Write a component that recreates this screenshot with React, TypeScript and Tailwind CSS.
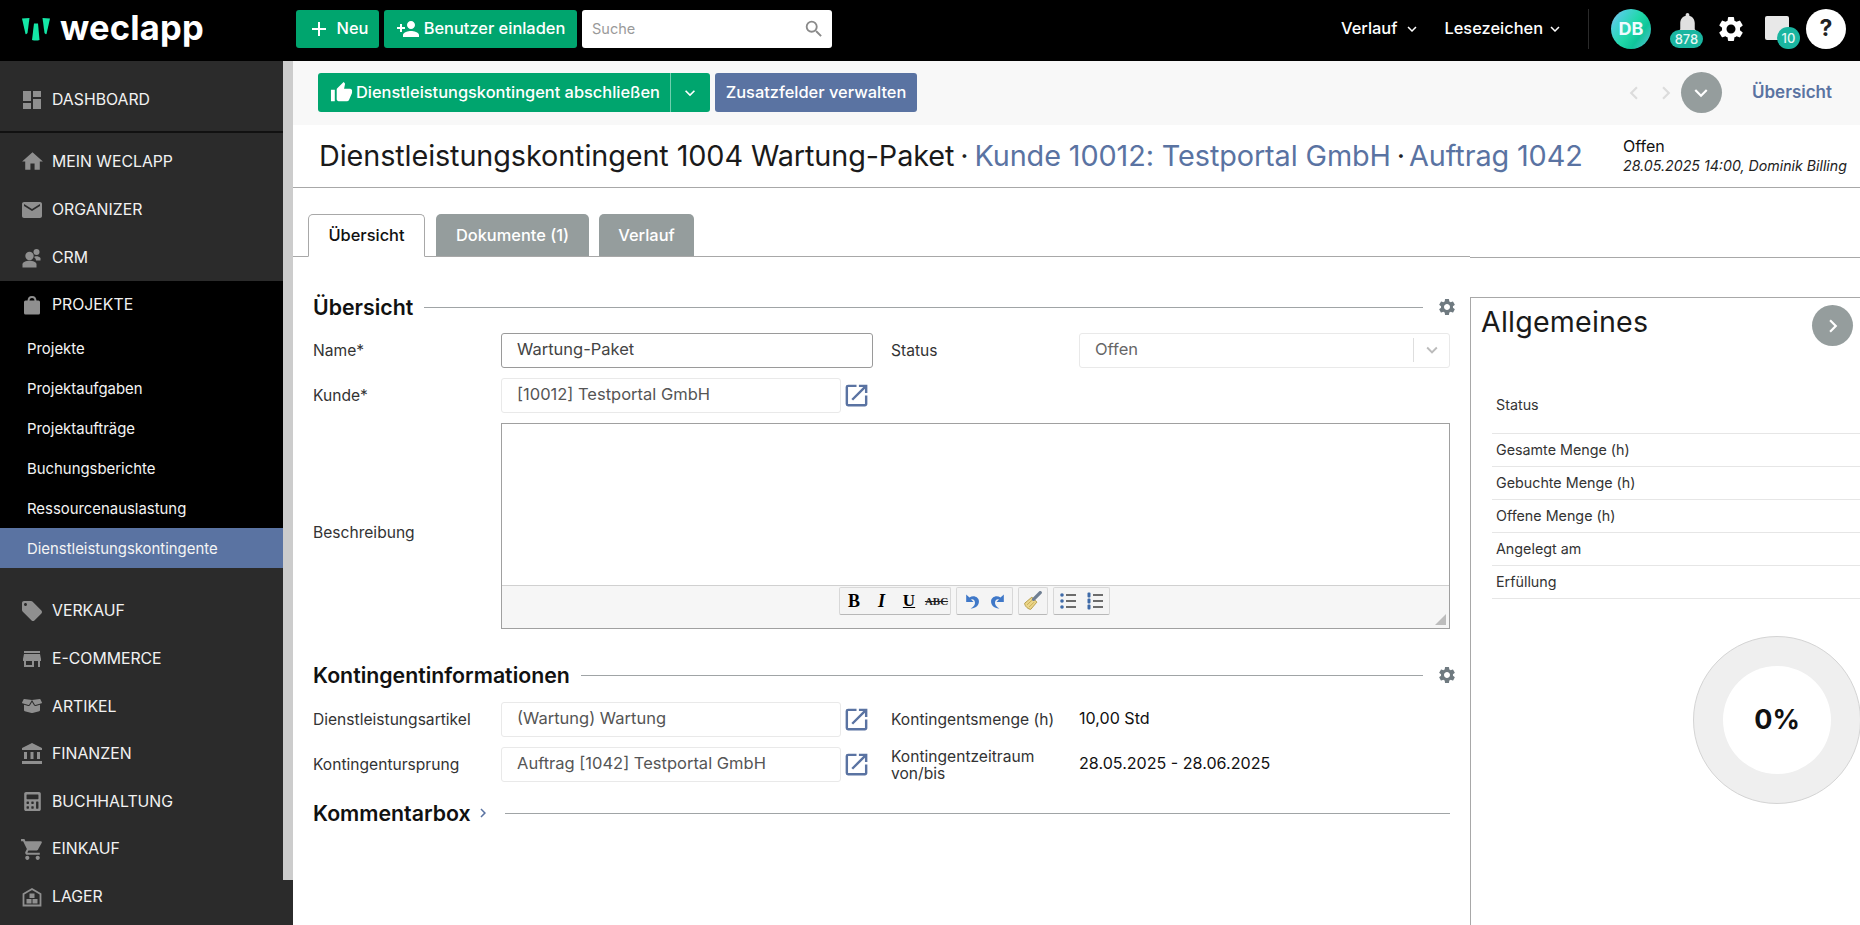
import React from "react";
import {
  MdDashboard, MdHome, MdEmail, MdLocalOffer, MdStore, MdAccountBalance, MdShoppingCart,
  MdThumbUp, MdPersonAdd, MdOpenInNew, MdNotifications, MdSettings, MdAdd, MdSearch,
  MdKeyboardArrowDown, MdKeyboardArrowRight, MdKeyboardArrowLeft,
} from "react-icons/md";
import { FaBoxOpen, FaCalculator } from "react-icons/fa";

const font = "font-['Inter','Liberation_Sans',sans-serif]";

function NavRow({ icon, label, h = "h-[48px]" }: { icon: React.ReactNode; label: string; h?: string }) {
  return (
    <div className={`${h} flex items-center pl-[23px] gap-[11px] pt-[1px] text-[15.8px] text-[#f2f2f2]`}>
      <span className="w-[18px] h-[18px] flex items-center justify-center text-[#8f8f8f] shrink-0 [&>svg]:shrink-0">{icon}</span>
      <span>{label}</span>
    </div>
  );
}

function Sub({ label, active }: { label: string; active?: boolean }) {
  return (
    <div className={`h-[40px] flex items-center pl-[27px] pt-[2px] text-[14.9px] text-[#f4f4f4] ${active ? "bg-[#5a73a2]" : ""}`}>{label}</div>
  );
}

function SectionHead({ title, gear = true }: { title: string; gear?: boolean }) {
  return (
    <div className="h-6 flex items-center">
      <span className="text-[21.3px] font-semibold text-[#111] leading-6 whitespace-nowrap">{title}</span>
      {!gear && <MdKeyboardArrowRight className="text-[#5a73a2] text-[18px] ml-[3px] shrink-0" />}
      <div className={`flex-1 h-px bg-[#a0a4a6] ${gear ? "ml-[11px]" : "ml-[13px]"}`} />
      {gear && <MdSettings className="text-[#6f7a80] text-[20px] ml-[14px] -mr-[7px] shrink-0" />}
    </div>
  );
}

function Label({ children }: { children: React.ReactNode }) {
  return <div className="w-[188px] shrink-0 text-[15.6px] text-[#333] whitespace-nowrap">{children}</div>;
}

function LinkField({ value }: { value: string }) {
  return (
    <div className="flex items-center w-[371px] shrink-0">
      <div className="w-[340px] h-[35px] pb-[2px] rounded-[3px] border border-[#e9e9e9] bg-white px-[15px] flex items-center text-[16.5px] text-[#555] whitespace-nowrap">{value}</div>
      <MdOpenInNew className="text-[#5a73a2] text-[29px] ml-[1px] shrink-0" />
    </div>
  );
}

function ToolBtn({ children }: { children: React.ReactNode }) {
  return <div className="w-[27.5px] h-[26px] flex items-center justify-center">{children}</div>;
}

function ToolGroup({ children }: { children: React.ReactNode }) {
  return <div className="flex bg-[#f4f4f4] border border-[#d8d8d8] border-b-[#b8b8b8] rounded-[2px]">{children}</div>;
}

function InfoRow({ label }: { label: string }) {
  return <div className="h-[33px] flex items-center pl-1 border-b border-[#e6e6e6] text-[14.3px] text-[#333]">{label}</div>;
}

const ArrowBack = ({ flip }: { flip?: boolean }) => (
  <svg width="17" height="17" viewBox="0 0 16 16" className={flip ? "-scale-x-100" : ""}>
    <path d="M3 1.5 L3 8.5 L10 8.5 L7.6 6 C9.6 5.2 11.8 7 11.2 10 C10.8 12 9 13.6 7 14.4 C11 15 15 12 15 8 C15 4 10 1.6 6.1 4.3 Z" fill="#3f78c8" />
  </svg>
);

const Brush = () => (
  <svg width="20" height="20" viewBox="0 0 18 18">
    <path d="M1.5 11 L8 5.5 L12.5 10 L7 16.5 C5 16.5 1.5 14 1.5 11 Z" fill="#ecd68a" stroke="#b0963e" strokeWidth="0.8" />
    <path d="M3.5 12.5 L8.5 8 M5.5 14.5 L10 10" stroke="#c4a94e" strokeWidth="0.8" />
    <path d="M9.5 7.5 L15.5 1.5" stroke="#6f7f92" strokeWidth="3" strokeLinecap="round" />
  </svg>
);

const Bullets = () => (
  <svg width="18" height="18" viewBox="0 0 18 18">
    {[3, 9, 15].map((y) => (
      <g key={y}>
        <circle cx="3" cy={y} r="1.8" fill="#3e6aa8" />
        <rect x="7" y={y - 0.7} width="10" height="1.4" fill="#333" />
      </g>
    ))}
  </svg>
);

const Numbers = () => (
  <svg width="18" height="18" viewBox="0 0 18 18">
    {[3, 9, 15].map((y) => (
      <g key={y}>
        <rect x="1.5" y={y - 2.5} width="3" height="5" rx="1" fill="#3e6aa8" />
        <rect x="7" y={y - 0.7} width="10" height="1.4" fill="#333" />
      </g>
    ))}
  </svg>
);

const Crm = () => (
  <svg width="20" height="20" viewBox="0 0 20 20" fill="currentColor">
    <circle cx="14.5" cy="4" r="3" />
    <path d="M12 9 C13 8 17 8 18.5 10 L18.5 12.5 L14 12.5 C14 11 13 10 12 9 Z" />
    <circle cx="7.5" cy="8" r="4.2" />
    <path d="M0.5 19.5 L0.5 16.5 C0.5 14 4 12.8 7.5 12.8 C11 12.8 14.5 14 14.5 16.5 L14.5 19.5 Z" />
  </svg>
);

const Bag = () => (
  <svg width="18" height="20" viewBox="0 0 18 20" fill="currentColor">
    <path d="M5.5 6 C5.5 0.5 12.5 0.5 12.5 6" fill="none" stroke="currentColor" strokeWidth="2" />
    <rect x="1" y="5.5" width="16" height="14" rx="1.5" />
  </svg>
);

const Lager = () => (
  <svg width="20" height="20" viewBox="0 0 20 20" fill="none" stroke="currentColor" strokeWidth="1.8">
    <path d="M1.5 18.5 L1.5 7 L10 2 L18.5 7 L18.5 18.5 Z" />
    <rect x="7.5" y="6.5" width="5" height="4.5" fill="currentColor" stroke="none" />
    <rect x="4.5" y="12" width="5" height="4.5" fill="currentColor" stroke="none" />
    <rect x="10.5" y="12" width="5" height="4.5" fill="currentColor" stroke="none" />
  </svg>
);

export default function App() {
  return (
    <div className={`${font} w-[1860px] h-[925px] overflow-hidden flex flex-col bg-white`}>
      {/* Top bar */}
      <header className="h-[61px] bg-black flex items-center pb-[4px] shrink-0 text-white">
        <div className="w-[296px] shrink-0 flex items-center pl-[22px] gap-[10px]">
          <svg width="28" height="24" viewBox="0 0 28 24" className="mt-[3px]">
            <path d="M0 0.5 L7.5 0 L5.5 15 Q4.6 16.5 3.5 16 Z" fill="#14e6a6" />
            <path d="M12 5.5 L16 5.5 L17.5 22 Q14 23 10 22 Z" fill="#14e6a6" />
            <path d="M20.5 0 L28 0.5 L24.5 16 Q23.4 16.5 22.5 15 Z" fill="#14e6a6" />
          </svg>
          <span className="text-[34.5px] font-bold tracking-[0.2px] leading-none">weclapp</span>
        </div>
        <div className="flex items-center gap-[5px]">
          <div className="w-[83px] h-[38px] rounded-[3px] bg-[#00a56e] flex items-center justify-center gap-[6px] text-[16.4px] font-medium">
            <MdAdd className="text-[24px]" /> Neu
          </div>
          <div className="w-[193px] h-[38px] rounded-[3px] bg-[#00a56e] flex items-center justify-center gap-[4px] text-[16.4px] font-medium whitespace-nowrap">
            <MdPersonAdd className="text-[24px]" /> Benutzer einladen
          </div>
          <div className="w-[250px] h-[38px] rounded-[3px] bg-white flex items-center justify-between pl-[10px] pr-[7px] text-[14.5px] text-[#9a9a9a]">
            Suche <MdSearch className="text-[22px] text-[#8a8a8a]" />
          </div>
        </div>
        <div className="flex-1" />
        <div className="flex items-center text-[16.4px] font-medium">
          <span>Verlauf</span>
          <MdKeyboardArrowDown className="text-[18px] ml-[6px] mr-[23px]" />
          <span>Lesezeichen</span>
          <MdKeyboardArrowDown className="text-[18px] ml-[3px]" />
          <div className="w-px h-[40px] bg-[#2a2a2a] ml-[24px] mr-[22px]" />
          <div className="w-[40px] h-[40px] rounded-full bg-[linear-gradient(125deg,#9fb4f0_0%,#48d0d8_22%,#20d8a8_50%,#0fc59a_70%,#5fc0d8_100%)] flex items-center justify-center text-[18px] font-bold text-[#f0fbff]">DB</div>
          <div className="relative w-[30px] h-[40px] ml-[21px]">
            <MdNotifications className="absolute left-[1px] top-[1px] text-[29px] text-[#e0e0e0]" />
            <span className="absolute left-[-2px] bottom-[1px] w-[33px] h-[18px] rounded-full bg-[#1ab5a0] text-[13px] text-center leading-[18px] text-[#e6f7f3]">878</span>
          </div>
          <MdSettings className="text-[30px] ml-[14px]" />
          <div className="relative w-[30px] h-[40px] ml-[20px]">
            <div className="absolute left-[-1px] top-[7px] w-[24px] h-[24px] rounded-[2px] bg-[#e8e8e8]" />
            <span className="absolute right-[-4px] bottom-0 w-[23px] h-[22px] rounded-full bg-[#1ab5a0] text-[13px] text-center leading-[22px] text-[#e6f7f3]">10</span>
          </div>
          <div className="w-[40px] h-[40px] rounded-full bg-white text-[#222] ml-[10px] mr-[14px] flex items-center justify-center text-[23px] font-bold">?</div>
        </div>
      </header>

      <div className="flex flex-1 min-h-0">
        {/* Sidebar */}
        <aside className="w-[293px] shrink-0 bg-[#2b2b2b] flex">
          <nav className="w-[283px] shrink-0">
            <div className="h-[72px] border-b-2 border-[#111] flex items-center pt-[6px]">
              <NavRow icon={<MdDashboard className="text-[24px]" />} label="DASHBOARD" />
            </div>
            <div className="h-[4px]" />
            <NavRow icon={<MdHome className="text-[25px]" />} label="MEIN WECLAPP" />
            <NavRow icon={<MdEmail className="text-[24px]" />} label="ORGANIZER" />
            <NavRow icon={<Crm />} label="CRM" />
            <div className="bg-black">
              <NavRow h="h-[47px]" icon={<Bag />} label="PROJEKTE" />
              <Sub label="Projekte" />
              <Sub label="Projektaufgaben" />
              <Sub label="Projektaufträge" />
              <Sub label="Buchungsberichte" />
              <Sub label="Ressourcenauslastung" />
              <Sub label="Dienstleistungskontingente" active />
            </div>
            <div className="h-[19px]" />
            <NavRow h="h-[47.6px]" icon={<MdLocalOffer className="text-[24px]" />} label="VERKAUF" />
            <NavRow h="h-[47.6px]" icon={<MdStore className="text-[24px]" />} label="E-COMMERCE" />
            <NavRow h="h-[47.6px]" icon={<FaBoxOpen className="text-[20px]" />} label="ARTIKEL" />
            <NavRow h="h-[47.6px]" icon={<MdAccountBalance className="text-[24px]" />} label="FINANZEN" />
            <NavRow h="h-[47.6px]" icon={<FaCalculator className="text-[19px]" />} label="BUCHHALTUNG" />
            <NavRow h="h-[47.6px]" icon={<MdShoppingCart className="text-[25px]" />} label="EINKAUF" />
            <NavRow h="h-[47.6px]" icon={<Lager />} label="LAGER" />
          </nav>
          <div className="w-[10px] h-[819px] bg-[#cccccc]" />
        </aside>

        {/* Main */}
        <main className="flex-1 min-w-0 flex flex-col overflow-hidden">
          <div className="h-[64px] shrink-0 bg-[#f8f8f8] flex items-start pt-[12px] pl-[25px] text-white text-[16.4px] font-medium">
            <div className="w-[392px] h-[39px] rounded-[3px] bg-[#00a56e] flex items-center">
              <MdThumbUp className="text-[23px] ml-[12px] shrink-0" />
              <span className="ml-[3px] w-[303px] whitespace-nowrap">Dienstleistungskontingent abschließen</span>
              <div className="w-px h-[39px] bg-[#6fcfae] ml-[11px]" />
              <MdKeyboardArrowDown className="text-[20px] ml-[9px] shrink-0" />
            </div>
            <div className="w-[202px] h-[39px] rounded-[3px] bg-[#5a73a2] ml-[5px] flex items-center justify-center whitespace-nowrap">Zusatzfelder verwalten</div>
            <div className="flex-1" />
            <MdKeyboardArrowLeft className="text-[26px] text-[#dcdcdc] mt-[7px]" />
            <MdKeyboardArrowRight className="text-[26px] text-[#dcdcdc] mt-[7px] ml-[6px]" />
            <div className="w-[41px] h-[41px] rounded-full bg-[#959d9d] flex items-center justify-center ml-[2px] -mt-[1px]">
              <MdKeyboardArrowDown className="text-[26px]" />
            </div>
            <span className="text-[#5a73a2] text-[17px] font-semibold ml-[30px] mr-[28px] mt-[7px]">Übersicht</span>
          </div>

          <div className="h-[63px] shrink-0 border-b border-[#a8a8a8] flex items-center pl-[26px]">
            <h1 className="text-[28.8px] font-normal text-[#1a1a1a] whitespace-nowrap tracking-[-0.1px] w-[1304px]">
              Dienstleistungskontingent 1004 Wartung-Paket <span className="text-[#222] -mx-[2px]">·</span>{" "}
              <span className="text-[#5a73a2]">Kunde 10012: Testportal GmbH</span> <span className="text-[#222] -mx-[2px]">·</span>{" "}
              <span className="text-[#5a73a2] -ml-[2px]">Auftrag 1042</span>
            </h1>
            <div className="leading-[20px]">
              <div className="text-[16px] text-[#111]">Offen</div>
              <div className="text-[14.2px] italic text-[#222] whitespace-nowrap">28.05.2025 14:00, Dominik Billing</div>
            </div>
          </div>

          {/* Tabs */}
          <div className="flex shrink-0 h-[70px]">
            <div className="w-[1177px] h-[69px] border-b border-[#a8a8a8] flex items-end pl-[15px] text-[16.4px] font-medium">
              <div className="w-[117px] h-[43px] -mb-px bg-white border border-[#a8a8a8] border-b-white rounded-t-[5px] flex items-center justify-center text-[#111]">Übersicht</div>
              <div className="w-[153px] h-[42px] ml-[11px] bg-[#959d9d] rounded-t-[5px] flex items-center justify-center text-white">Dokumente (1)</div>
              <div className="w-[95px] h-[42px] ml-[10px] bg-[#959d9d] rounded-t-[5px] flex items-center justify-center text-white">Verlauf</div>
            </div>
            <div className="flex-1 border-b border-[#a8a8a8]" />
          </div>

          <div className="flex flex-1 min-h-0">
            {/* Form */}
            <div className="w-[1177px] shrink-0 pl-[20px] pr-[20px]">
              <div className="mt-[37px]"><SectionHead title="Übersicht" /></div>
              <div className="mt-[14px] flex items-center h-[35px]">
                <Label>Name*</Label>
                <div className="w-[372px] h-[35px] pb-[2px] rounded-[3px] border border-[#9a9a9a] bg-white px-[15px] flex items-center text-[16.5px] text-[#444]">Wartung-Paket</div>
                <div className="w-[188px] ml-[18px] shrink-0 text-[15.6px] text-[#333]">Status</div>
                <div className="flex-1 h-[35px] pb-[2px] rounded-[3px] border border-[#e9e9e9] bg-white flex items-center text-[16.5px] text-[#666]">
                  <span className="flex-1 pl-[15px]">Offen</span>
                  <div className="w-[36px] h-[24px] border-l border-[#dedede] flex items-center justify-center">
                    <MdKeyboardArrowDown className="text-[22px] text-[#bbb]" />
                  </div>
                </div>
              </div>
              <div className="mt-[10px] flex items-center h-[35px]">
                <Label>Kunde*</Label>
                <LinkField value="[10012] Testportal GmbH" />
              </div>
              <div className="mt-[10px] flex items-center h-[206px]">
                <div className="pt-[14px]"><Label>Beschreibung</Label></div>
                <div className="flex-1 h-[206px] border border-[#a0a0a0] flex flex-col">
                  <div className="flex-1 bg-white" />
                  <div className="relative h-[43px] bg-[#f6f6f6] border-t border-[#d0d0d0] flex justify-center items-start pt-[1px] pr-[2px] gap-[5px]">
                    <ToolGroup>
                      <ToolBtn><span className="font-['Liberation_Serif',serif] font-bold text-[18px] text-black">B</span></ToolBtn>
                      <ToolBtn><span className="font-['Liberation_Serif',serif] font-bold italic text-[18px] text-black">I</span></ToolBtn>
                      <ToolBtn><span className="font-['Liberation_Serif',serif] font-bold underline text-[17px] text-black">U</span></ToolBtn>
                      <ToolBtn><span className="font-['Liberation_Serif',serif] font-bold line-through text-[11px] text-[#222]">ABC</span></ToolBtn>
                    </ToolGroup>
                    <ToolGroup>
                      <ToolBtn><ArrowBack /></ToolBtn>
                      <ToolBtn><ArrowBack flip /></ToolBtn>
                    </ToolGroup>
                    <ToolGroup>
                      <ToolBtn><Brush /></ToolBtn>
                    </ToolGroup>
                    <ToolGroup>
                      <ToolBtn><Bullets /></ToolBtn>
                      <ToolBtn><Numbers /></ToolBtn>
                    </ToolGroup>
                    <div className="absolute right-[3px] bottom-[3px] w-0 h-0 border-l-[11px] border-l-transparent border-b-[11px] border-b-[#bdbdbd]" />
                  </div>
                </div>
              </div>
              <div className="mt-[34px]"><SectionHead title="Kontingentinformationen" /></div>
              <div className="mt-[15px] flex items-center h-[35px]">
                <Label>Dienstleistungsartikel</Label>
                <LinkField value="(Wartung) Wartung" />
                <div className="w-[188px] ml-[19px] shrink-0 text-[15.6px] text-[#333] whitespace-nowrap">Kontingentsmenge (h)</div>
                <span className="text-[16.1px] pb-[2px] text-[#111]">10,00 Std</span>
              </div>
              <div className="mt-[10px] flex items-center h-[35px]">
                <Label>Kontingentursprung</Label>
                <LinkField value="Auftrag [1042] Testportal GmbH" />
                <div className="w-[188px] ml-[19px] shrink-0 text-[15.6px] leading-[17px] text-[#333]">Kontingentzeitraum<br />von/bis</div>
                <span className="text-[16.1px] pb-[2px] text-[#111]">28.05.2025 - 28.06.2025</span>
              </div>
              <div className="mt-[19px]"><SectionHead title="Kommentarbox" gear={false} /></div>
            </div>

            {/* Right panel */}
            <aside className="flex-1 mt-[39px] border-t border-l border-[#a8a8a8] relative pl-[21px]">
              <div className="h-[80px] -ml-[11px] pt-[3px] text-[28.6px] text-[#1a1a1a] tracking-[0.2px]">Allgemeines</div>
              <div className="absolute right-[8px] top-[7px] w-[41px] h-[41px] rounded-full bg-[#959d9d] flex items-center justify-center text-white">
                <MdKeyboardArrowRight className="text-[26px]" />
              </div>
              <div className="h-[56px] flex items-center pl-1 pb-[2px] border-b border-[#e6e6e6] text-[14.3px] text-[#333]">Status</div>
              <InfoRow label="Gesamte Menge (h)" />
              <InfoRow label="Gebuchte Menge (h)" />
              <InfoRow label="Offene Menge (h)" />
              <InfoRow label="Angelegt am" />
              <InfoRow label="Erfüllung" />
              <div className="ml-[201px] mt-[37px] w-[168px] h-[168px] rounded-full bg-[#efefef] border border-[#d4d4d4] flex items-center justify-center">
                <div className="w-[108px] h-[108px] rounded-full bg-white flex items-center justify-center text-[27px] font-bold text-[#111]">0%</div>
              </div>
            </aside>
          </div>
        </main>
      </div>
    </div>
  );
}
